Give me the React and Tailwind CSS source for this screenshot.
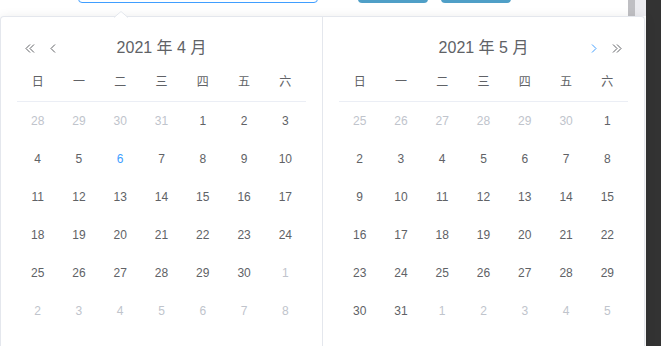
import React from "react";

const WEEK = ["日", "一", "二", "三", "四", "五", "六"];

function buildMonth(prevLast, firstDow, daysInMonth) {
  const cells = [];
  for (let i = firstDow - 1; i >= 0; i--) cells.push({ d: prevLast - i, t: "other" });
  for (let d = 1; d <= daysInMonth; d++) cells.push({ d, t: "cur" });
  let n = 1;
  while (cells.length < 42) cells.push({ d: n++, t: "other" });
  return cells;
}

const april = buildMonth(31, 4, 30);
const may = buildMonth(30, 6, 31);

function Chevron({ dir = "left", double = false, color = "#606266" }) {
  const single = dir === "left" ? "M5 0.5 L1 4.5 L5 8.5" : "M1 0.5 L5 4.5 L1 8.5";
  if (!double) {
    return (
      <svg width="6" height="9" viewBox="0 0 6 9" fill="none" stroke={color} strokeWidth="1">
        <path d={single} />
      </svg>
    );
  }
  const a = dir === "left" ? "M5 0.5 L1 4.5 L5 8.5" : "M1 0.5 L5 4.5 L1 8.5";
  const b = dir === "left" ? "M9 0.5 L5 4.5 L9 8.5" : "M5 0.5 L9 4.5 L5 8.5";
  return (
    <svg width="10" height="9" viewBox="0 0 10 9" fill="none" stroke={color} strokeWidth="1">
      <path d={a} />
      <path d={b} />
    </svg>
  );
}

function MonthTable({ cells, today }) {
  const rows = [];
  for (let r = 0; r < 6; r++) rows.push(cells.slice(r * 7, r * 7 + 7));
  return (
    <div className="w-full text-[12px]">
      <div className="grid grid-cols-7 h-[40px] items-center border-b border-[#ebeef5] text-[#606266]">
        {WEEK.map((w) => (
          <div key={w} className="text-center">{w}</div>
        ))}
      </div>
      {rows.map((row, i) => (
        <div key={i} className="grid grid-cols-7 h-[38px] items-center">
          {row.map((c, j) => {
            const isToday = today && c.t === "cur" && c.d === today;
            const cls = isToday
              ? "text-[#409eff]"
              : c.t === "other"
              ? "text-[#c0c4cc]"
              : "text-[#606266]";
            return (
              <div key={j} className={"text-center " + cls}>
                {c.d}
              </div>
            );
          })}
        </div>
      ))}
    </div>
  );
}

export default function App() {
  return (
    <div className="flex w-[661px] h-[346px] overflow-hidden bg-white font-['Liberation_Sans','Noto_Sans_CJK_SC',sans-serif]">
      <div className="flex flex-col w-[646px] h-full">
        {/* top strip with clipped controls */}
        <div className="flex h-[16px] shrink-0 items-start">
          <div className="ml-[78px] w-[240px] h-[40px] -mt-[37px] rounded-[4px] border border-[#409eff] bg-white shrink-0" />
          <div className="ml-[40px] w-[70px] h-[32px] -mt-[29px] rounded-[4px] bg-[#4f9fc7] shrink-0" />
          <div className="ml-[13px] w-[70px] h-[32px] -mt-[29px] rounded-[4px] bg-[#4f9fc7] shrink-0" />
          <div className="flex-1" />
          <div className="w-[7px] h-full bg-[#bfbfc3] shrink-0" />
          <div className="w-[11px] h-full bg-[#ececf0] shrink-0" />
        </div>
        {/* popup panel */}
        <div className="relative w-[645px] flex-1 bg-white border-l border-t border-r border-[#e4e7ed] rounded-t-[4px] shadow-[0_2px_12px_0_rgba(0,0,0,0.1)]">
          <svg
            className="absolute left-[113px] -top-[6px]"
            width="14"
            height="7"
            viewBox="0 0 14 7"
          >
            <path d="M0 7 L7 0 L14 7 Z" fill="#ffffff" />
            <path d="M0 6.5 L7 0.5 L14 6.5" fill="none" stroke="#e4e7ed" strokeWidth="1" />
          </svg>
          <div className="flex h-full">
            <div className="w-[322px] shrink-0 border-r border-[#e4e7ed] px-4 pt-[17px]">
              <div className="grid grid-cols-[1fr_auto_1fr] h-[28px] items-center">
                <div className="flex items-center gap-[15px] pl-[8px]">
                  <Chevron dir="left" double />
                  <Chevron dir="left" />
                </div>
                <div className="text-[16px] text-[#606266]">2021 年 4 月</div>
                <div />
              </div>
              <MonthTable cells={april} today={6} />
            </div>
            <div className="flex-1 px-4 pt-[17px]">
              <div className="grid grid-cols-[1fr_auto_1fr] h-[28px] items-center">
                <div />
                <div className="text-[16px] text-[#606266]">2021 年 5 月</div>
                <div className="flex items-center justify-end gap-[15px] pr-[6px]">
                  <Chevron dir="right" color="#409eff" />
                  <Chevron dir="right" double />
                </div>
              </div>
              <MonthTable cells={may} />
            </div>
          </div>
        </div>
      </div>
      <div className="w-[15px] h-full bg-[#333333] shrink-0" />
    </div>
  );
}
